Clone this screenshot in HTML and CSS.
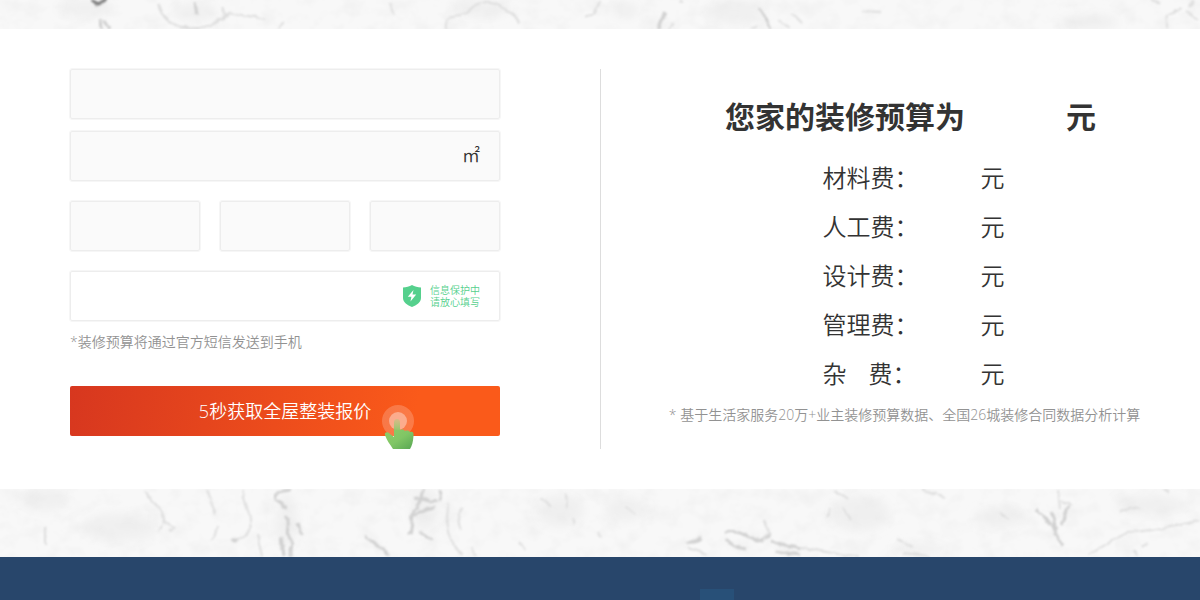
FILE: index.html
```html
<!DOCTYPE html>
<html lang="zh-CN">
<head>
<meta charset="utf-8">
<meta name="viewport" content="width=device-width, initial-scale=1">
<title>装修预算</title>
<link rel="stylesheet" href="styles.css">
</head>
<body>
<main class="marble">
  <svg class="vein vein-top" viewBox="0 0 1200 29" preserveAspectRatio="xMidYMid slice" aria-hidden="true">
    <defs>
      <filter id="soft" x="-20%" y="-20%" width="140%" height="140%">
        <feTurbulence type="fractalNoise" baseFrequency="0.12" numOctaves="2" seed="3" result="noise"/>
        <feDisplacementMap in="SourceGraphic" in2="noise" scale="5" xChannelSelector="R" yChannelSelector="G"/>
        <feGaussianBlur stdDeviation="1"/>
      </filter>
      <filter id="cloud" x="-50%" y="-50%" width="200%" height="200%"><feGaussianBlur stdDeviation="5"/></filter>
      <filter id="grain" x="0" y="0" width="100%" height="100%">
        <feTurbulence type="fractalNoise" baseFrequency="0.05 0.06" numOctaves="3" seed="8"/>
        <feColorMatrix values="0 0 0 0 0.84  0 0 0 0 0.84  0 0 0 0 0.84  1.2 0 0 0 -0.52"/>
      </filter>
    </defs>
    <rect width="1200" height="29" filter="url(#grain)"/>
    <g class="smudge" filter="url(#cloud)">
      <ellipse cx="85" cy="8" rx="28" ry="9"/><ellipse cx="195" cy="12" rx="22" ry="9"/>
      <ellipse cx="480" cy="8" rx="30" ry="9"/><ellipse cx="625" cy="10" rx="14" ry="8"/>
      <ellipse cx="735" cy="12" rx="30" ry="12"/><ellipse cx="1090" cy="22" rx="28" ry="8"/>
    </g>
    <g class="lines" filter="url(#soft)">
      <path class="dark" d="M92 0l5 4 6-2 2-4"/>
      <path class="bold" d="M100 19l1 10m3-8l5 8m86-26l2 12"/>
      <path d="M157 3c5 12 14 22 27 25 14 2 31-2 38-10 6-6 12-4 20-3l24 4M176 26l23 3M222 7l5 10-10 3M278 28l6-6"/>
      <path d="M446 29c-1-8 2-13 14-14 10-1 10-11 22-12 8-1 17 1 24 7 8 4 12 8 13 14M390 3l4 12M585 18l10-5 4-12"/>
      <path class="bold" d="M657 28l9-15M759 8l12 20M763 14l8 14"/>
      <path d="M674 22l-5 7M680 0l3 1M792 13l10 10M778 20l12 8M750 28l6-2M862 11l18 1M1166 29c4-7-3-12 3-15l12-5M1190 7l3-7M1151 0l9 4M1187 12l12 9"/>
    </g>
  </svg>

  <section class="card">
    <form class="quote">
      <input class="field" type="text" aria-label="所在城市">
      <div class="field-wrap">
        <input class="field" type="text" aria-label="房屋面积">
        <span class="suffix unit">㎡</span>
      </div>
      <div class="rooms">
        <input class="field" type="text" aria-label="室">
        <input class="field" type="text" aria-label="厅">
        <input class="field" type="text" aria-label="卫">
      </div>
      <div class="field-wrap phone">
        <input class="field plain" type="tel" aria-label="手机号">
        <span class="suffix guard">
          <svg width="20" height="22" viewBox="0 0 20 22" aria-hidden="true">
            <path fill="#55d08d" d="M10 0C12.500 1.500 16 2.300 19 2.500V13c0 4.500-4.500 7-9 9-4.500-2-9-4.500-9-9V2.500C4 2.300 7.500 1.500 10 0z"/>
            <path fill="#fff" d="M11.500 5L5.800 11.800h3.600L8.500 16.500l5.700-7h-3.700z"/>
          </svg>
          <span>信息保护中<br>请放心填写</span>
        </span>
      </div>
      <p class="hint">*装修预算将通过官方短信发送到手机</p>
      <div class="action">
        <button class="submit" type="button">5秒获取全屋整装报价</button>
        <svg class="pointer" width="34" height="48" viewBox="0 0 34 48" aria-hidden="true">
          <defs>
            <linearGradient id="hand" x1="0" y1="0" x2="1" y2="1">
              <stop offset="0" stop-color="#8ecb68"/><stop offset="0.500" stop-color="#80c665"/><stop offset="1" stop-color="#58a653"/>
            </linearGradient>
            <linearGradient id="finger" x1="0" y1="0" x2="0" y2="1">
              <stop offset="0" stop-color="#a5cf7c" stop-opacity="0.400"/><stop offset="1" stop-color="#85c768"/>
            </linearGradient>
          </defs>
          <circle cx="17" cy="17" r="16" fill="#fff" fill-opacity="0.200"/>
          <circle cx="17" cy="17" r="9" fill="#fff" fill-opacity="0.380"/>
          <path fill="url(#finger)" d="M13 28V18c0-4 6-4 6 0v10z"/>
          <path fill="url(#hand)" d="M13 26h6c3-1 4 0 5 1 3-1 4 0 5 1 3-1 4 1 3.500 4C32 38 31 42 29 45H12C9 40 6 37 4 31c-1-3 3-4 5-1l4 3z"/>
        </svg>
      </div>
    </form>

    <div class="result">
      <h2 class="total"><span>您家的装修预算为</span><span>元</span></h2>
      <dl class="fees">
        <div class="fee"><dt>材料费：</dt><dd>元</dd></div>
        <div class="fee"><dt>人工费：</dt><dd>元</dd></div>
        <div class="fee"><dt>设计费：</dt><dd>元</dd></div>
        <div class="fee"><dt>管理费：</dt><dd>元</dd></div>
        <div class="fee"><dt>杂<span class="space"></span>费：</dt><dd>元</dd></div>
      </dl>
      <p class="source">* 基于生活家服务20万+业主装修预算数据、全国26城装修合同数据分析计算</p>
    </div>
  </section>

  <svg class="vein vein-bottom" viewBox="0 0 1200 68" preserveAspectRatio="xMidYMid slice" aria-hidden="true">
    <rect width="1200" height="68" filter="url(#grain)"/>
    <g class="smudge" filter="url(#cloud)">
      <ellipse cx="45" cy="10" rx="24" ry="12"/><ellipse cx="120" cy="38" rx="38" ry="14"/>
      <ellipse cx="287" cy="32" rx="10" ry="28"/><ellipse cx="425" cy="20" rx="14" ry="22"/>
      <ellipse cx="560" cy="22" rx="24" ry="16"/><ellipse cx="625" cy="20" rx="20" ry="12"/>
      <ellipse cx="860" cy="24" rx="30" ry="18"/><ellipse cx="920" cy="60" rx="24" ry="6"/>
      <ellipse cx="1000" cy="28" rx="26" ry="10"/><ellipse cx="1150" cy="16" rx="35" ry="10"/>
    </g>
    <g class="lines" filter="url(#soft)">
      <path d="M145 2c5 12 18 15 19 29 1 4 7 5 10 8l-5 3M163 36l-4 6M45 38v18M208 2l7 24M217 37l-2 10-4 5M242 2c5 13 5 20 9 28 2 10-7 20-18 22M258 46l5 21"/>
      <path class="bold" d="M291 1c-14 1-18 5-14 11 7 0 3 7 10 7M285 27c7 7 0 13 3 20 7 7 2 12 3 20M281 48l3 19M298 34l3 12M232 51h6"/>
      <path class="bold" d="M365 46c4 10 16 9 24 20"/>
      <path class="bold" d="M424 0c-4 8-3 14-10 21l-4 25M414 10c8-4 18 4 24 1M412 27c14-6 14-7 23-8M419 42c5 0 7 8 14 9M439 2l2 10"/>
      <path d="M447 14c3 6-2 15 0 24 1 10 7 18 15 29M463 20c-6 5-6 12-2 20M472 58l3 9M540 10l11 7M566 4l1 16M573 28l2 8M598 43l3 5M625 18l11 7M520 52l5 10"/>
      <path class="bold" d="M725 44c11-5 18 3 36 8l9-7M726 50c5 7 12 9 20 10M771 52l29 8M775 62l25 4M686 55l16-6"/>
      <path d="M764 31l5 12-6 8M687 59l20 6M800 59c22 2 36 7 60 8M903 64l26 3M898 50l14 8M842 18l8 13M835 2l14 8M827 28l4-8M922 0l22 8M1000 24l8 5"/>
      <path class="bold" d="M1037 20c7 12 19 16 19 25l6 12M1051 22l5 18M1070 18c-8 7-5 12-9 17"/>
      <path d="M1058 1l2 18M1061 12l12 5M1088 64c14-3 27-17 39-20 23-3 49-5 73-13M1148 54l-6 4M1134 61l2 6M1119 22l21-4M1162 0l8 2"/>
    </g>
  </svg>
</main>
<footer class="footer"><span class="block"></span></footer>
</body>
</html>
```
FILE: styles.css
```css
* { box-sizing: border-box; }

body {
  margin: 0;
  color: #333;
  font-family: "Open Sans", "Noto Sans CJK SC", sans-serif;
  font-weight: 350;
}

h2, p, dl, dd { margin: 0; }

.marble { background: #f8f8f8; }

.vein { display: block; width: 100%; }
.vein-top { height: 29px; }
.vein-bottom { height: 68px; }

.smudge { fill: #e4e4e4; fill-opacity: 0.4; }
.lines { fill: none; stroke: #dedede; stroke-width: 2; }
.lines .bold { stroke: #d0d0d0; stroke-width: 3; }
.lines .dark { stroke: #7e7e7e; stroke-width: 3; }

.card {
  display: grid;
  grid-template-columns: 1fr 1fr;
  padding: 40px 0;
  background: #fff;
}

.quote {
  display: flex;
  flex-direction: column;
  padding: 0 100px 0 70px;
}

.field {
  display: block;
  width: 100%;
  min-width: 0;
  height: 50px;
  padding: 0 20px;
  border: 1px solid #ededed;
  border-radius: 2px;
  outline: 1px solid #f6f6f6;
  background: #fafafa;
  color: inherit;
  font: inherit;
}

.field.plain { background: #fff; }

.field-wrap { position: relative; margin-top: 12px; }
.field-wrap.phone { margin-top: 20px; }

.suffix {
  position: absolute;
  top: 0;
  right: 20px;
  bottom: 0;
  display: flex;
  align-items: center;
}

.unit { padding-bottom: 4px; font-size: 18px; }

.guard {
  gap: 8px;
  color: #55d08d;
  font-size: 10px;
  line-height: 12px;
}

.rooms {
  display: grid;
  grid-template-columns: repeat(3, 1fr);
  gap: 20px;
  margin-top: 20px;
}

.hint {
  margin-top: 9px;
  color: #929292;
  font-size: 14px;
  line-height: 24px;
}

.action { position: relative; margin-top: 32px; }

.submit {
  display: block;
  width: 100%;
  height: 50px;
  padding: 0 0 2px;
  border: 0;
  border-radius: 2px;
  background: linear-gradient(100deg, #d7371f, #fa5a1a 80%);
  color: #fff;
  font: inherit;
  font-size: 18px;
  cursor: pointer;
}

.pointer {
  position: absolute;
  right: 85px;
  bottom: -16px;
  pointer-events: none;
}

.result {
  display: flex;
  flex-direction: column;
  align-items: center;
  padding: 28px 0 17px 20px;
  border-left: 1px solid #ddd;
}

.total {
  display: flex;
  gap: 101px;
  font-size: 30px;
  font-weight: 700;
  line-height: 40px;
}

.fees { margin-top: 16px; padding-left: 6px; font-size: 24px; }

.fee {
  display: grid;
  grid-template-columns: 158px auto;
  line-height: 49px;
}

.space { display: inline-block; width: 22px; }

.source {
  padding-right: 12px;
  color: #929292;
  font-size: 14px;
  line-height: 34px;
}

.footer {
  display: flex;
  padding: 32px 0 0 700px;
  min-height: 43px;
  background: #28466b;
}

.block { width: 34px; background: #285078; }
```
